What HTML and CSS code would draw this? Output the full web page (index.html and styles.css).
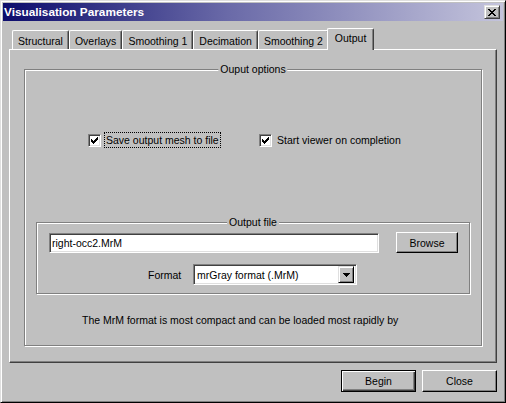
FILE: index.html
```html
<!DOCTYPE html>
<html>
<head>
<meta charset="utf-8">
<title>Visualisation Parameters</title>
<link rel="stylesheet" href="styles.css">
</head>
<body>
<div class="window">
  <div class="titlebar">
    <span class="title">Visualisation Parameters</span>
    <button class="close-btn" aria-label="Close">
      <svg width="8" height="7" viewBox="0 0 8 7" shape-rendering="crispEdges"><path fill="#000" d="M0 0h2v1H0z M6 0h2v1H6z M1 1h2v1H1z M5 1h2v1H5z M2 2h4v1H2z M3 3h2v1H3z M2 4h4v1H2z M1 5h2v1H1z M5 5h2v1H5z M0 6h2v1H0z M6 6h2v1H6z"/></svg>
    </button>
  </div>
  <div class="client">
    <div class="tabs">
      <div class="tab">Structural</div>
      <div class="tab">Overlays</div>
      <div class="tab">Smoothing 1</div>
      <div class="tab">Decimation</div>
      <div class="tab">Smoothing 2</div>
      <div class="tab selected">Output</div>
    </div>
    <div class="panel">
      <div class="group options-group">
        <span class="group-title">Ouput options</span>
        <div class="check-row">
          <label class="check">
            <span class="box"><svg width="7" height="7" viewBox="0 0 7 7" shape-rendering="crispEdges"><path fill="#000" d="M6 0h1v1H6z M5 1h2v1H5z M0 2h1v1H0z M4 2h3v1H4z M0 3h2v1H0z M3 3h3v1H3z M0 4h5v1H0z M1 5h3v1H1z M2 6h1v1H2z"/></svg></span>
            <span class="check-label focused">Save output mesh to file</span>
          </label>
          <label class="check">
            <span class="box"><svg width="7" height="7" viewBox="0 0 7 7" shape-rendering="crispEdges"><path fill="#000" d="M6 0h1v1H6z M5 1h2v1H5z M0 2h1v1H0z M4 2h3v1H4z M0 3h2v1H0z M3 3h3v1H3z M0 4h5v1H0z M1 5h3v1H1z M2 6h1v1H2z"/></svg></span>
            <span class="check-label">Start viewer on completion</span>
          </label>
        </div>
        <div class="group file-group">
          <span class="group-title">Output file</span>
          <div class="file-row">
            <div class="textbox">right-occ2.MrM</div>
            <button class="btn browse">Browse</button>
          </div>
          <div class="format-row">
            <span class="format-label">Format</span>
            <div class="select">
              <span class="select-value">mrGray format (.MrM)</span>
              <span class="drop"><svg width="7" height="4" viewBox="0 0 7 4" shape-rendering="crispEdges"><path fill="#000" d="M0 0h7v1H0z M1 1h5v1H1z M2 2h3v1H2z M3 3h1v1H3z"/></svg></span>
            </div>
          </div>
        </div>
        <p class="note">The MrM format is most compact and can be loaded most rapidly by</p>
      </div>
    </div>
    <div class="actions">
      <button class="btn default">Begin</button>
      <button class="btn">Close</button>
    </div>
  </div>
</div>
</body>
</html>
```

FILE: styles.css
```css
* { box-sizing: border-box; }

html, body {
  margin: 0;
  padding: 0;
  background: #c0c0c0;
}

body {
  font-family: "Liberation Sans", Arial, sans-serif;
  font-size: 10.5px;
  color: #000;
}

.window {
  width: 506px;
  height: 403px;
  background: #c0c0c0;
  border: 1px solid;
  border-color: #dfdfdf #000 #000 #dfdfdf;
  box-shadow: inset 1px 1px #fff, inset -1px -1px #808080;
  padding: 2px;
}

.titlebar {
  height: 18px;
  display: flex;
  align-items: center;
  justify-content: space-between;
  padding: 0 3px 0 1px;
  background: linear-gradient(90deg, #0c0c6c 0%, #6a6aa8 45%, #c4c4dc 100%);
}

.title {
  color: #fff;
  font-weight: bold;
  font-size: 11.8px;
  white-space: nowrap;
}

.close-btn {
  width: 16px;
  height: 14px;
  padding: 0;
  margin: 0;
  background: #c0c0c0;
  border: 1px solid;
  border-color: #dfdfdf #404040 #404040 #dfdfdf;
  box-shadow: inset 1px 1px #fff, inset -1px -1px #808080;
  display: flex;
  align-items: center;
  justify-content: center;
}

.close-btn svg { display: block; }

.client {
  padding: 7px 6px 0;
}

.tabs {
  height: 21px;
  display: flex;
  align-items: flex-end;
  padding-left: 3px;
}

.tab {
  height: 19px;
  padding: 2px 5px 0;
  display: flex;
  align-items: center;
  white-space: nowrap;
  background: #c0c0c0;
  border-top: 1px solid #fff;
  border-left: 1px solid #fff;
  border-right: 1px solid #404040;
  border-radius: 2px 2px 0 0;
  box-shadow: inset -1px 0 #808080;
}

.tab.selected {
  height: 22px;
  margin: 0 -2px -1px;
  padding: 0 7px 3px;
  position: relative;
  z-index: 1;
}

.panel {
  height: 314px;
  border: 1px solid;
  border-color: #fff #404040 #404040 #fff;
  box-shadow: inset -1px -1px #808080;
  padding: 19px 13px 0 14px;
}

.group {
  position: relative;
  border: 1px solid #808080;
  box-shadow: inset 1px 1px #fff, 1px 1px #fff;
}

.group-title {
  position: absolute;
  top: -7px;
  left: 50%;
  transform: translateX(-50%);
  padding: 0 2px;
  line-height: 13px;
  background: #c0c0c0;
  white-space: nowrap;
}

.options-group {
  width: 458px;
  height: 277px;
}

.check-row {
  margin-top: 62px;
  height: 16px;
  padding-left: 63px;
  display: grid;
  grid-template-columns: 171px auto;
  align-items: center;
}

.check {
  display: flex;
  align-items: center;
  gap: 3px;
}

.box {
  width: 13px;
  height: 13px;
  background: #fff;
  border: 1px solid;
  border-color: #808080 #fff #fff #808080;
  box-shadow: inset 1px 1px #404040, inset -1px -1px #dfdfdf;
  display: flex;
  align-items: center;
  justify-content: center;
}

.box svg { display: block; }

.check-label {
  border: 1px solid transparent;
  padding: 0 1px;
  line-height: 14px;
  white-space: nowrap;
}

.check-label.focused {
  border: 1px dotted #000;
}

.file-group {
  width: 434px;
  height: 72px;
  margin: 74px 0 0 11px;
}

.file-row {
  margin-top: 9px;
  height: 21px;
  padding-left: 12px;
  display: flex;
  align-items: center;
}

.textbox {
  width: 330px;
  height: 20px;
  background: #fff;
  border: 1px solid;
  border-color: #808080 #fff #fff #808080;
  box-shadow: inset 1px 1px #404040, inset -1px -1px #dfdfdf;
  padding: 0 2px;
  line-height: 18px;
  white-space: nowrap;
}

.btn {
  font-family: inherit;
  font-size: 10.5px;
  color: #000;
  padding: 0;
  margin: 0;
  background: #c0c0c0;
  border: 1px solid;
  border-color: #fff #000 #000 #fff;
  box-shadow: inset -1px -1px #808080;
}

.btn.browse {
  width: 62px;
  height: 21px;
  margin-left: 17px;
}

.format-row {
  margin-top: 11px;
  padding-left: 111px;
  display: flex;
  align-items: center;
}

.format-label {
  width: 45px;
}

.select {
  width: 164px;
  height: 21px;
  background: #fff;
  border: 1px solid;
  border-color: #808080 #fff #fff #808080;
  box-shadow: inset 1px 1px #404040, inset -1px -1px #dfdfdf;
  padding: 2px;
  display: flex;
  align-items: center;
}

.select-value {
  flex: 1;
  padding-left: 1px;
  white-space: nowrap;
}

.drop {
  width: 16px;
  height: 17px;
  background: #c0c0c0;
  border: 1px solid;
  border-color: #dfdfdf #000 #000 #dfdfdf;
  box-shadow: inset 1px 1px #fff, inset -1px -1px #808080;
  display: flex;
  align-items: center;
  justify-content: center;
}

.drop svg { display: block; }

.note {
  margin: 20px 0 0 57px;
  line-height: 13px;
  white-space: nowrap;
}

.actions {
  margin-top: 7px;
  display: flex;
  justify-content: flex-end;
  gap: 6px;
}

.actions .btn {
  width: 75px;
  height: 22px;
}

.btn.default {
  border: 1px solid #000;
  box-shadow: inset 1px 1px #fff, inset -1px -1px #404040, inset -2px -2px #808080;
}
```
